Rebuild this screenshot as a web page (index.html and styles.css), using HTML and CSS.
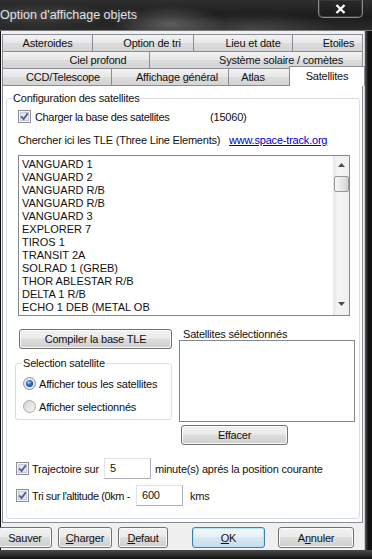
FILE: index.html
```html
<!DOCTYPE html>
<html lang="fr">

<head>
    <meta charset="UTF-8" />
    <meta name="viewport" content="width=device-width, initial-scale=1.0" />
    <title>Option d'affichage objets</title>

    <link rel="stylesheet" href="styles.css">
</head>

<body>
    <div class="window">
        <div class="titlebar">
            <span class="title">Option d'affichage objets</span>
            <div class="close">
                <svg width="11" height="10" viewBox="0 0 11 10">
                    <path d="M1.5 1 L9.5 9 M9.5 1 L1.5 9" stroke="#fff" stroke-width="2.4" />
                </svg>
            </div>
        </div>

        <div class="main">
            <div class="client">
                <div class="tabs">
                    <div class="tab-row">
                        <div class="tab w-ast">Asteroides</div>
                        <div class="tab w-tri">Option de tri</div>
                        <div class="tab w-lieu">Lieu et date</div>
                        <div class="tab w-etoiles">Etoiles</div>
                    </div>
                    <div class="tab-row">
                        <div class="tab w-ciel">Ciel profond</div>
                        <div class="tab w-sys">Système solaire / comètes</div>
                    </div>
                    <div class="tab-row">
                        <div class="tab w-ccd">CCD/Telescope</div>
                        <div class="tab w-aff">Affichage général</div>
                        <div class="tab w-atlas">Atlas</div>
                        <div class="tab tab-active">Satellites</div>
                    </div>
                </div>

                <div class="page">
                    <fieldset class="group">
                        <legend>Configuration des satellites</legend>

                        <div class="check-row">
                            <svg class="cb" width="13" height="13" viewBox="0 0 13 13">
                                <rect x="0.5" y="0.5" width="12" height="12" fill="#f6f6f6" stroke="#8e8f8f" />
                                <rect x="2.5" y="2.5" width="8" height="8" fill="#e4e6ec" stroke="#c6cad2" />
                                <path d="M3.2 6.4 L5.6 9 L9.8 3.2" fill="none" stroke="#4a5f97" stroke-width="1.8" />
                            </svg>
                            <span class="load-label">Charger la base des satellites</span>
                            <span>(15060)</span>
                        </div>

                        <div class="tle-row">
                            <span class="tle-text">Chercher ici les TLE (Three Line Elements)</span>
                            <a class="link" href="#">www.space-track.org</a>
                        </div>

                        <div class="listbox">
                            <div class="items">
                                <div>VANGUARD 1</div>
                                <div>VANGUARD 2</div>
                                <div>VANGUARD R/B</div>
                                <div>VANGUARD R/B</div>
                                <div>VANGUARD 3</div>
                                <div>EXPLORER 7</div>
                                <div>TIROS 1</div>
                                <div>TRANSIT 2A</div>
                                <div>SOLRAD 1 (GREB)</div>
                                <div>THOR ABLESTAR R/B</div>
                                <div>DELTA 1 R/B</div>
                                <div>ECHO 1 DEB (METAL OB</div>
                            </div>
                            <div class="scroll">
                                <svg class="arrow-up" width="7" height="4" viewBox="0 0 7 4">
                                    <path d="M0 4 L3.5 0 L7 4 Z" fill="#4d4d4d" />
                                </svg>
                                <div class="thumb"></div>
                                <div class="scroll-space"></div>
                                <svg class="arrow-down" width="7" height="4" viewBox="0 0 7 4">
                                    <path d="M0 0 L7 0 L3.5 4 Z" fill="#4d4d4d" />
                                </svg>
                            </div>
                        </div>

                        <div class="mid">
                            <div class="left">
                                <button class="btn btn-compile">Compiler la base TLE</button>
                                <fieldset class="sel-group">
                                    <legend>Selection satellite</legend>
                                    <div class="radio-row">
                                        <svg class="radio" width="13" height="13" viewBox="0 0 13 13">
                                            <defs>
                                                <radialGradient id="dot" cx="0.4" cy="0.35" r="0.7">
                                                    <stop offset="0" stop-color="#b6dcf8" />
                                                    <stop offset="0.45" stop-color="#2a78c6" />
                                                    <stop offset="1" stop-color="#1c4f8f" />
                                                </radialGradient>
                                            </defs>
                                            <circle cx="6.5" cy="6.5" r="6" fill="#e9e9e9" stroke="#8e8f8f" />
                                            <circle cx="6.5" cy="6.5" r="3.6" fill="url(#dot)" />
                                        </svg>
                                        <span>Afficher tous les satellites</span>
                                    </div>
                                    <div class="radio-row second">
                                        <svg class="radio" width="13" height="13" viewBox="0 0 13 13">
                                            <defs>
                                                <linearGradient id="off" x1="0" y1="0" x2="1" y2="1">
                                                    <stop offset="0" stop-color="#d4d4d4" />
                                                    <stop offset="1" stop-color="#f6f6f6" />
                                                </linearGradient>
                                            </defs>
                                            <circle cx="6.5" cy="6.5" r="6" fill="url(#off)" stroke="#a9a9a9" />
                                        </svg>
                                        <span>Afficher selectionnés</span>
                                    </div>
                                </fieldset>
                            </div>

                            <div class="right">
                                <div class="sel-label">Satellites sélectionnés</div>
                                <div class="sel-box"></div>
                                <button class="btn btn-clear">Effacer</button>
                            </div>
                        </div>

                        <div class="input-row">
                            <svg class="cb" width="13" height="13" viewBox="0 0 13 13">
                                <rect x="0.5" y="0.5" width="12" height="12" fill="#f6f6f6" stroke="#8e8f8f" />
                                <rect x="2.5" y="2.5" width="8" height="8" fill="#e4e6ec" stroke="#c6cad2" />
                                <path d="M3.2 6.4 L5.6 9 L9.8 3.2" fill="none" stroke="#4a5f97" stroke-width="1.8" />
                            </svg>
                            <span class="traj-label">Trajectoire sur</span>
                            <div class="field">5</div>
                            <span class="after">minute(s) aprés la position courante</span>
                        </div>

                        <div class="input-row alt">
                            <svg class="cb" width="13" height="13" viewBox="0 0 13 13">
                                <rect x="0.5" y="0.5" width="12" height="12" fill="#f6f6f6" stroke="#8e8f8f" />
                                <rect x="2.5" y="2.5" width="8" height="8" fill="#e4e6ec" stroke="#c6cad2" />
                                <path d="M3.2 6.4 L5.6 9 L9.8 3.2" fill="none" stroke="#4a5f97" stroke-width="1.8" />
                            </svg>
                            <span class="alt-label">Tri sur l'altitude (0km -</span>
                            <div class="field">600</div>
                            <span class="after kms">kms</span>
                        </div>
                    </fieldset>
                </div>

                <div class="buttons">
                    <button class="btn b-sauver">Sauver</button>
                    <button class="btn b-charger"><u>C</u>harger</button>
                    <button class="btn b-defaut"><u>D</u>efaut</button>
                    <button class="btn btn-ok b-ok"><u>O</u>K</button>
                    <button class="btn b-annuler">A<u>n</u>nuler</button>
                </div>
            </div>
            <div class="edge"></div>
        </div>
        <div class="bottom"></div>
    </div>
</body>

</html>
```

FILE: styles.css
```css
body {
    margin: 0;
    background: #0e0e0e;
    font-family: "Liberation Sans", Arial, sans-serif;
    font-size: 11px;
    letter-spacing: -0.2px;
    color: #111;
}

.window {
    width: 372px;
    height: 559px;
    display: flex;
    flex-direction: column;
    overflow: hidden;
}

/* title bar */

.titlebar {
    height: 31px;
    flex-shrink: 0;
    display: flex;
    justify-content: space-between;
    align-items: flex-start;
    background:
        radial-gradient(ellipse 55px 18px at 170px 24px, rgba(150, 150, 150, 0.5), transparent),
        radial-gradient(ellipse 80px 16px at 255px 28px, rgba(120, 120, 120, 0.35), transparent),
        radial-gradient(ellipse 70px 14px at 40px 16px, rgba(110, 110, 110, 0.35), transparent),
        linear-gradient(#2e2e2e, #1c1c1c 55%, #2b2b2b);
    border-bottom: 1px solid #777;
    box-sizing: border-box;
}

.title {
    margin: 8px 0 0 0;
    font-size: 12.5px;
    letter-spacing: 0;
    color: #e2e2e2;
    text-shadow: 0 0 6px rgba(255, 255, 255, 0.3);
}

.close {
    width: 45px;
    height: 18px;
    margin: 0 9px 0 0;
    box-sizing: border-box;
    border: 1px solid #8a8a8a;
    border-top: none;
    border-radius: 0 0 5px 5px;
    box-shadow: inset 0 0 0 1px #3c3c3c;
    background: linear-gradient(#2a2a2a, #1a1a1a);
    display: flex;
    align-items: center;
    justify-content: center;
}

/* frame */

.main {
    flex: 1;
    display: flex;
}

.client {
    width: 363px;
    margin-left: 1px;
    background: #f0f0f0;
    display: flex;
    flex-direction: column;
    padding-top: 3px;
    box-sizing: border-box;
}

.edge {
    flex: 1;
    border-left: 1px solid #cfcfcf;
    background: linear-gradient(90deg, #5a5a5a, #111 45%);
}

.bottom {
    height: 9px;
    flex-shrink: 0;
    background: linear-gradient(#4a4a4a, #121212);
}

/* tabs */

.tabs {
    padding-left: 1px;
}

.tab-row {
    display: flex;
    height: 17px;
}

.tab {
    box-sizing: border-box;
    height: 17px;
    margin-right: -1px;
    border: 1px solid #898c95;
    border-bottom: none;
    background: linear-gradient(#f3f3f3, #e6e6e6 50%, #dcdcdc 51%, #d4d4d4);
    text-align: center;
    line-height: 16px;
    white-space: nowrap;
}

.w-ast { width: 91px; }
.w-tri { width: 102px; padding-left: 18px; }
.w-lieu { width: 100px; padding-left: 20px; }
.w-etoiles { width: 71px; padding-left: 22px; }
.w-ciel { width: 148px; padding-left: 44px; }
.w-sys { width: 214px; padding-left: 50px; }
.w-ccd { width: 110px; padding-left: 12px; }
.w-aff { width: 118px; padding-left: 14px; }
.w-atlas { width: 62px; padding-right: 12px; }

.tab-active {
    width: 76px;
    height: 20px;
    margin-top: -2px;
    background: #fff;
    position: relative;
    z-index: 1;
    line-height: 18px;
}

/* page */

.page {
    box-sizing: border-box;
    height: 438px;
    margin: 0 1px;
    border: 1px solid #898c95;
    background: #fff;
    padding: 0 2px 0 3px;
}

.group {
    margin: 6px 0 0 0;
    padding: 5px 0 12px 11px;
    border: 1px solid #d5dfe5;
    border-radius: 3px;
    min-width: 0;
}

.group > legend {
    margin-left: -6px;
    padding: 0 1px;
    line-height: 13px;
}

.check-row {
    display: flex;
    align-items: center;
    height: 13px;
}

.cb {
    flex-shrink: 0;
    margin-right: 4px;
}

.load-label {
    width: 175px;
    letter-spacing: -0.35px;
}

.tle-row {
    margin-top: 11px;
    height: 13px;
    line-height: 13px;
    display: flex;
    white-space: nowrap;
}

.tle-text {
    width: 211px;
    flex-shrink: 0;
}

.link {
    color: #0000cc;
}

/* satellite list */

.listbox {
    margin-top: 8px;
    width: 332px;
    height: 161px;
    box-sizing: border-box;
    border: 1px solid #828790;
    display: flex;
}

.items {
    flex: 1;
    padding: 2px 0 0 3px;
    line-height: 13px;
    letter-spacing: 0;
}

.scroll {
    width: 16px;
    background: linear-gradient(90deg, #e8e8e8, #f5f5f5 30%, #f0f0f0);
    display: flex;
    flex-direction: column;
    align-items: center;
}

.arrow-up {
    margin-top: 7px;
}

.thumb {
    margin-top: 9px;
    width: 13px;
    height: 14px;
    border: 1px solid #979797;
    border-radius: 2px;
    background: linear-gradient(90deg, #f7f7f7, #e3e3e3 60%, #d2d2d2);
}

.scroll-space {
    flex: 1;
}

.arrow-down {
    margin-bottom: 9px;
}

/* middle part */

.mid {
    display: flex;
    margin-top: 12px;
}

.left {
    width: 157px;
    margin-left: -3px;
}

.btn {
    box-sizing: border-box;
    height: 21px;
    padding: 0;
    border: 1px solid #707070;
    border-radius: 3px;
    background: linear-gradient(#f2f2f2, #ebebeb 45%, #dddddd 50%, #cfcfcf);
    box-shadow: inset 0 0 0 1px #fbfbfb;
    font-family: inherit;
    font-size: 11px;
    letter-spacing: -0.2px;
    color: #111;
}

.btn-compile {
    display: block;
    width: 153px;
    height: 20px;
    margin: 1px 0 0 4px;
}

.sel-group {
    margin: 8px 0 0 0;
    padding: 0 0 6px 7px;
    border: 1px solid #d5dfe5;
    border-radius: 3px;
    min-width: 0;
}

.sel-group > legend {
    margin-left: -1px;
    padding: 0 1px;
    line-height: 13px;
}

.radio-row {
    display: flex;
    align-items: center;
    height: 13px;
    margin-top: 7px;
    white-space: nowrap;
}

.radio-row.second {
    margin-top: 10px;
}

.radio {
    margin-right: 3px;
}

.right {
    width: 176px;
    margin-left: 7px;
}

.sel-label {
    line-height: 12px;
    height: 12px;
    padding-left: 4px;
}

.sel-box {
    height: 82px;
    box-sizing: border-box;
    border: 1px solid #828790;
    background: #fff;
}

.btn-clear {
    display: block;
    width: 107px;
    height: 20px;
    margin: 3px 0 0 2px;
}

/* bottom inputs */

.input-row {
    display: flex;
    align-items: center;
    height: 21px;
    margin-top: 13px;
    margin-left: -2px;
    white-space: nowrap;
}

.input-row.alt {
    margin-top: 6px;
}

.input-row .cb {
    margin-right: 3px;
}

.traj-label {
    width: 72px;
    flex-shrink: 0;
}

.alt-label {
    width: 104px;
    flex-shrink: 0;
    letter-spacing: -0.4px;
}

.field {
    box-sizing: border-box;
    width: 47px;
    height: 21px;
    flex-shrink: 0;
    border: 1px solid #abadb3;
    border-top-color: #e3e3e3;
    border-left-color: #e2e3ea;
    background: #fff;
    padding: 3px 0 0 5px;
}

.after {
    margin-left: 4px;
}

.after.kms {
    margin-left: 7px;
}

/* dialog buttons */

.buttons {
    display: flex;
    margin-top: 4px;
}

.b-sauver { width: 54px; margin-left: -3px; }
.b-charger { width: 54px; margin-left: 6px; }
.b-defaut { width: 50px; margin-left: 6px; }
.b-ok { width: 73px; margin-left: 24px; }
.b-annuler { width: 76px; margin-left: 13px; }

.btn-ok {
    border-color: #3c7fb1;
    box-shadow: inset 0 0 0 1px #b9e3f9;
    background: linear-gradient(#f2f8fc, #e6f1f8 45%, #d9e8f2 50%, #cadde9);
}
```
